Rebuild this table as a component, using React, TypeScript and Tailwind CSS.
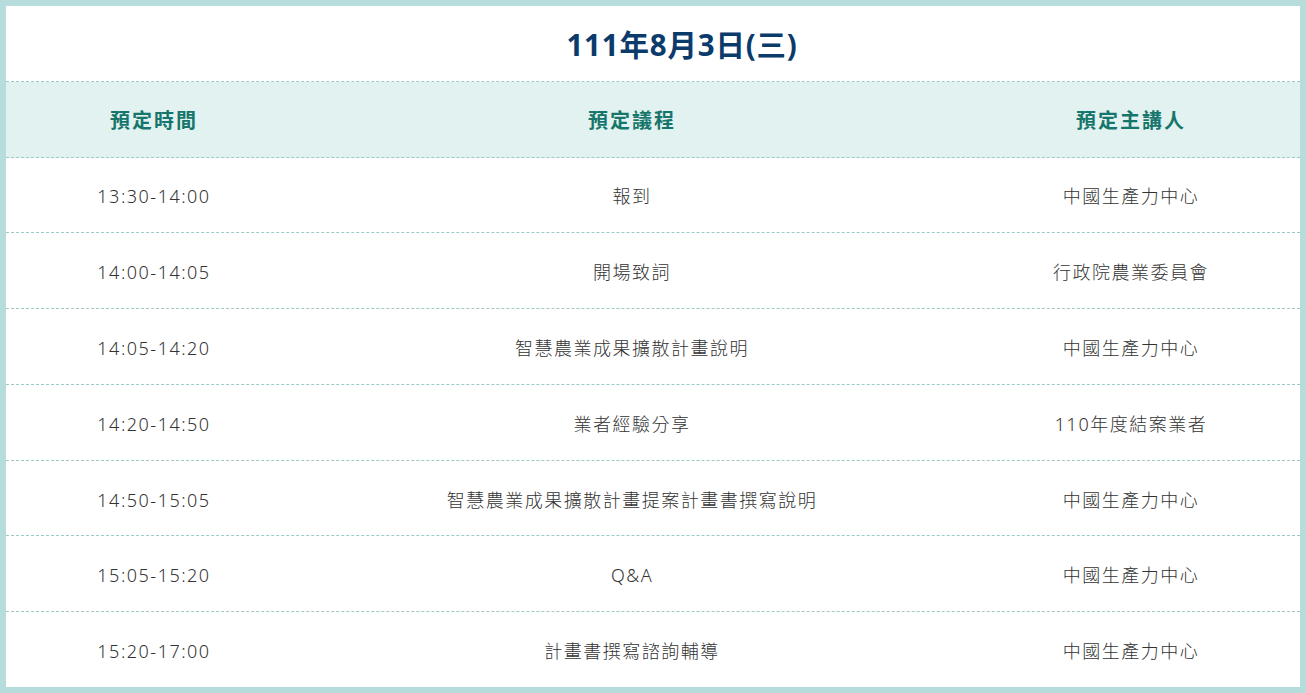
const rows = [
  { time: '13:30-14:00', topic: '報到', speaker: '中國生產力中心' },
  { time: '14:00-14:05', topic: '開場致詞', speaker: '行政院農業委員會' },
  { time: '14:05-14:20', topic: '智慧農業成果擴散計畫說明', speaker: '中國生產力中心' },
  { time: '14:20-14:50', topic: '業者經驗分享', speaker: '110年度結案業者' },
  { time: '14:50-15:05', topic: '智慧農業成果擴散計畫提案計畫書撰寫說明', speaker: '中國生產力中心' },
  { time: '15:05-15:20', topic: 'Q&A', speaker: '中國生產力中心' },
  { time: '15:20-17:00', topic: '計畫書撰寫諮詢輔導', speaker: '中國生產力中心' },
]

export default function App() {
  return (
    <div
      className="h-[693px] w-[1306px] border-[6px] border-[#b7dcdc] bg-white flex flex-col"
      style={{ fontFamily: '"Noto Sans", "Noto Sans CJK TC", sans-serif' }}
    >
      {/* 標題 */}
      <div className="flex-1 flex items-center justify-center pl-[58px] pt-[4px] border-b border-dashed border-[#9ccac6]">
        <h2 className="text-[29.5px] font-bold text-[#0b3b6b] tracking-[0.8px]">111年8月3日(三)</h2>
      </div>

      {/* 表頭 */}
      <div className="flex-1 grid grid-cols-[296px_660px_1fr] items-center pt-[4px] bg-[#e2f2f1] border-b border-dashed border-[#9ccac6] text-[20px] font-bold text-[#17766b] tracking-[2px]">
        <div className="text-center">預定時間</div>
        <div className="text-center">預定議程</div>
        <div className="text-center">預定主講人</div>
      </div>

      {rows.map((r, i) => (
        <div
          key={i}
          className={`flex-1 grid grid-cols-[296px_660px_1fr] items-center pt-[4px] text-[18px] font-light text-[#333] tracking-[1.5px] ${
            i < rows.length - 1 ? 'border-b border-dashed border-[#9ccac6]' : ''
          }`}
        >
          <div className="text-center">{r.time}</div>
          <div className="text-center">{r.topic}</div>
          <div className="text-center">{r.speaker}</div>
        </div>
      ))}
    </div>
  )
}
